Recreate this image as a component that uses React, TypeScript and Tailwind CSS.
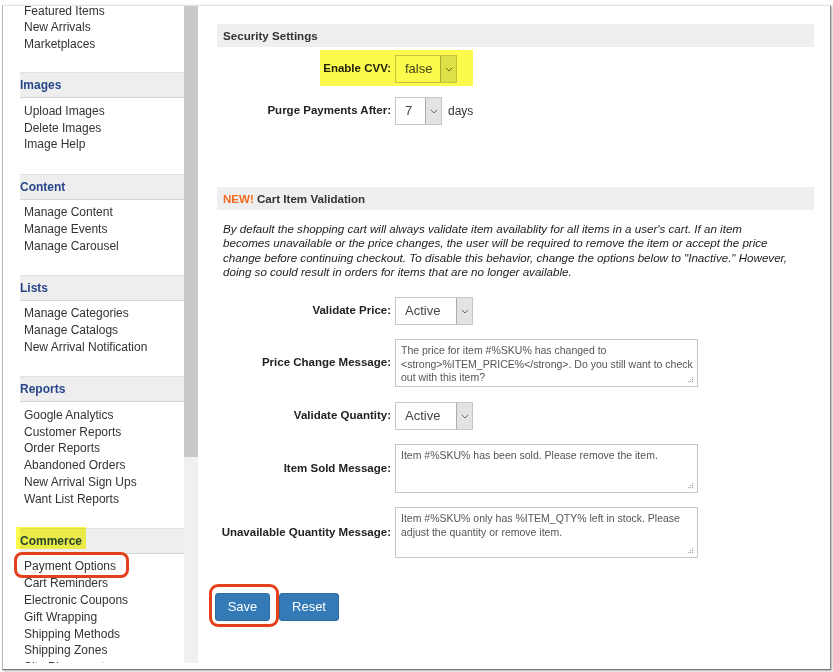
import React from "react";

interface Section {
  title: string;
  items: string[];
}

const topItems = ["Featured Items", "New Arrivals", "Marketplaces"];

const sections: Section[] = [
  { title: "Images", items: ["Upload Images", "Delete Images", "Image Help"] },
  { title: "Content", items: ["Manage Content", "Manage Events", "Manage Carousel"] },
  { title: "Lists", items: ["Manage Categories", "Manage Catalogs", "New Arrival Notification"] },
  {
    title: "Reports",
    items: [
      "Google Analytics",
      "Customer Reports",
      "Order Reports",
      "Abandoned Orders",
      "New Arrival Sign Ups",
      "Want List Reports",
    ],
  },
  {
    title: "Commerce",
    items: [
      "Payment Options",
      "Cart Reminders",
      "Electronic Coupons",
      "Gift Wrapping",
      "Shipping Methods",
      "Shipping Zones",
      "Site Placements",
    ],
  },
];

function LinkList({ items }: { items: string[] }) {
  return (
    <ul className="pl-[4px]">
      {items.map((item) => (
        <li key={item} className="text-[12px] leading-[16.8px] text-[#333] whitespace-nowrap">
          {item}
        </li>
      ))}
    </ul>
  );
}

function Chevron() {
  return (
    <svg width="8" height="5" viewBox="0 0 8 5">
      <path d="M0.8 0.8 L4 4 L7.2 0.8" fill="none" stroke="#6b6b6b" strokeWidth="1" />
    </svg>
  );
}

function Select({ value, className }: { value: string; className: string }) {
  return (
    <div className={"flex h-[28px] border border-[#c6c6c6] bg-white " + className}>
      <div className="flex flex-1 items-center pl-[9px] text-[13px] text-[#444]">{value}</div>
      <div className="flex w-[16px] items-center justify-center border-l border-[#adadad] bg-[#e3e3e3]">
        <Chevron />
      </div>
    </div>
  );
}

function TextBox({ text, className }: { text: React.ReactNode; className: string }) {
  return (
    <div
      className={
        "relative w-[303px] border border-[#c6c6c6] bg-white px-[5px] pt-[4px] text-[10.5px] leading-[13.5px] text-[#555] whitespace-nowrap " +
        className
      }
    >
      {text}
      <svg className="absolute bottom-[3px] right-[3px]" width="7" height="7" viewBox="0 0 7 7">
        <rect x="5" y="1" width="1.2" height="1.2" fill="#aaa" />
        <rect x="3" y="3" width="1.2" height="1.2" fill="#aaa" />
        <rect x="5" y="3" width="1.2" height="1.2" fill="#aaa" />
        <rect x="1" y="5" width="1.2" height="1.2" fill="#aaa" />
        <rect x="3" y="5" width="1.2" height="1.2" fill="#aaa" />
        <rect x="5" y="5" width="1.2" height="1.2" fill="#aaa" />
      </svg>
    </div>
  );
}

function Row({ label, children, className }: { label: string; children: React.ReactNode; className: string }) {
  return (
    <div className={"flex items-center " + className}>
      <div className="w-[178px] pr-[4px] text-right text-[11.5px] font-bold text-[#222] whitespace-nowrap">
        {label}
      </div>
      {children}
    </div>
  );
}

export default function App() {
  return (
    <div className="relative h-[672px] w-[833px] overflow-hidden bg-white font-['Liberation_Sans',Arial,sans-serif]">
      <div className="ml-[2px] mt-[5px] flex h-[665px] w-[829px] border border-l-[#b8b8b8] border-t-[#e4e4e4] border-r-[#8a8a8a] border-b-[#7a7a7a] shadow-[1px_1px_2px_rgba(0,0,0,0.35)]">
        {/* sidebar */}
        <div className="flex h-[657px]">
          <div className="w-[181px] overflow-hidden pl-[17px]">
            <div className="-mt-[3.4px]">
              <LinkList items={topItems} />
              {sections.map((s, i) => (
                <div key={s.title} className={i === 0 ? "mt-[19.3px]" : "mt-[20.3px]"}>
                  <div className="flex h-[26px] items-center border-y border-t-[#e2e2e2] border-b-[#d6d6d6] bg-[#eeeeee] text-[12px] font-bold text-[#27478a]">
                    {s.title}
                  </div>
                  <div className="pt-[4.6px]">
                    <LinkList items={s.items} />
                  </div>
                </div>
              ))}
            </div>
          </div>
          <div className="w-[14px] bg-[#f0f0f0]">
            <div className="h-[451px] bg-[#c9c9c9]" />
          </div>
        </div>

        {/* main */}
        <div className="flex-1 pl-[19px] pr-[16px] pt-[18px]">
          <div className="flex h-[23px] items-center bg-[#efefef] px-[6px] text-[11.6px] font-bold text-[#333]">
            Security Settings
          </div>
          <Row label="Enable CVV:" className="mt-[8px]">
            <Select value="false" className="w-[62px]" />
          </Row>
          <Row label="Purge Payments After:" className="mt-[14px]">
            <Select value="7" className="w-[47px]" />
            <span className="ml-[6px] text-[12px] text-[#333]">days</span>
          </Row>

          <div className="mt-[62px] flex h-[23px] items-center bg-[#efefef] px-[6px] text-[11.6px] font-bold text-[#333]">
            <span className="mr-[3px] text-[#f26b21]">NEW!</span>
            Cart Item Validation
          </div>
          <p className="mt-[11.75px] px-[6px] text-[11.6px] italic leading-[14.5px] text-[#222] whitespace-nowrap">
            By default the shopping cart will always validate item availablity for all items in a user's cart. If an item
            <br />
            becomes unavailable or the price changes, the user will be required to remove the item or accept the price
            <br />
            change before continuing checkout. To disable this behavior, change the options below to "Inactive." However,
            <br />
            doing so could result in orders for items that are no longer available.
          </p>

          <Row label="Validate Price:" className="mt-[17.25px]">
            <Select value="Active" className="w-[78px]" />
          </Row>
          <Row label="Price Change Message:" className="mt-[14px]">
            <TextBox
              className="h-[48px]"
              text={
                <>
                  The price for item #%SKU% has changed to
                  <br />
                  &lt;strong&gt;%ITEM_PRICE%&lt;/strong&gt;. Do you still want to check
                  <br />
                  out with this item?
                </>
              }
            />
          </Row>
          <Row label="Validate Quantity:" className="mt-[15px]">
            <Select value="Active" className="w-[78px]" />
          </Row>
          <Row label="Item Sold Message:" className="mt-[14px]">
            <TextBox className="h-[49px]" text="Item #%SKU% has been sold. Please remove the item." />
          </Row>
          <Row label="Unavailable Quantity Message:" className="mt-[14px]">
            <TextBox
              className="h-[51px]"
              text={
                <>
                  Item #%SKU% only has %ITEM_QTY% left in stock. Please
                  <br />
                  adjust the quantity or remove item.
                </>
              }
            />
          </Row>

          <div className="-ml-[2px] mt-[35px] flex">
            <button className="h-[28px] w-[55px] rounded-[3px] border border-[#2e6da4] bg-[#337ab7] text-[13px] text-white">
              Save
            </button>
            <button className="ml-[9px] h-[28px] w-[60px] rounded-[3px] border border-[#2e6da4] bg-[#337ab7] text-[13px] text-white">
              Reset
            </button>
          </div>
        </div>
      </div>

      {/* annotation layer */}
      <div className="pointer-events-none absolute left-[16px] top-[527px] h-[22px] w-[70px] bg-[#fbfb4e] mix-blend-multiply" />
      <div className="pointer-events-none absolute left-[320px] top-[50px] h-[36px] w-[153px] bg-[#fbfb4e] mix-blend-multiply" />
      <div className="pointer-events-none absolute left-[14px] top-[552px] h-[26px] w-[115px] rounded-[8px] border-[3px] border-[#e4401c]" />
      <div className="pointer-events-none absolute left-[209px] top-[584px] h-[43px] w-[70px] rounded-[9px] border-[3px] border-[#e4401c]" />
    </div>
  );
}
